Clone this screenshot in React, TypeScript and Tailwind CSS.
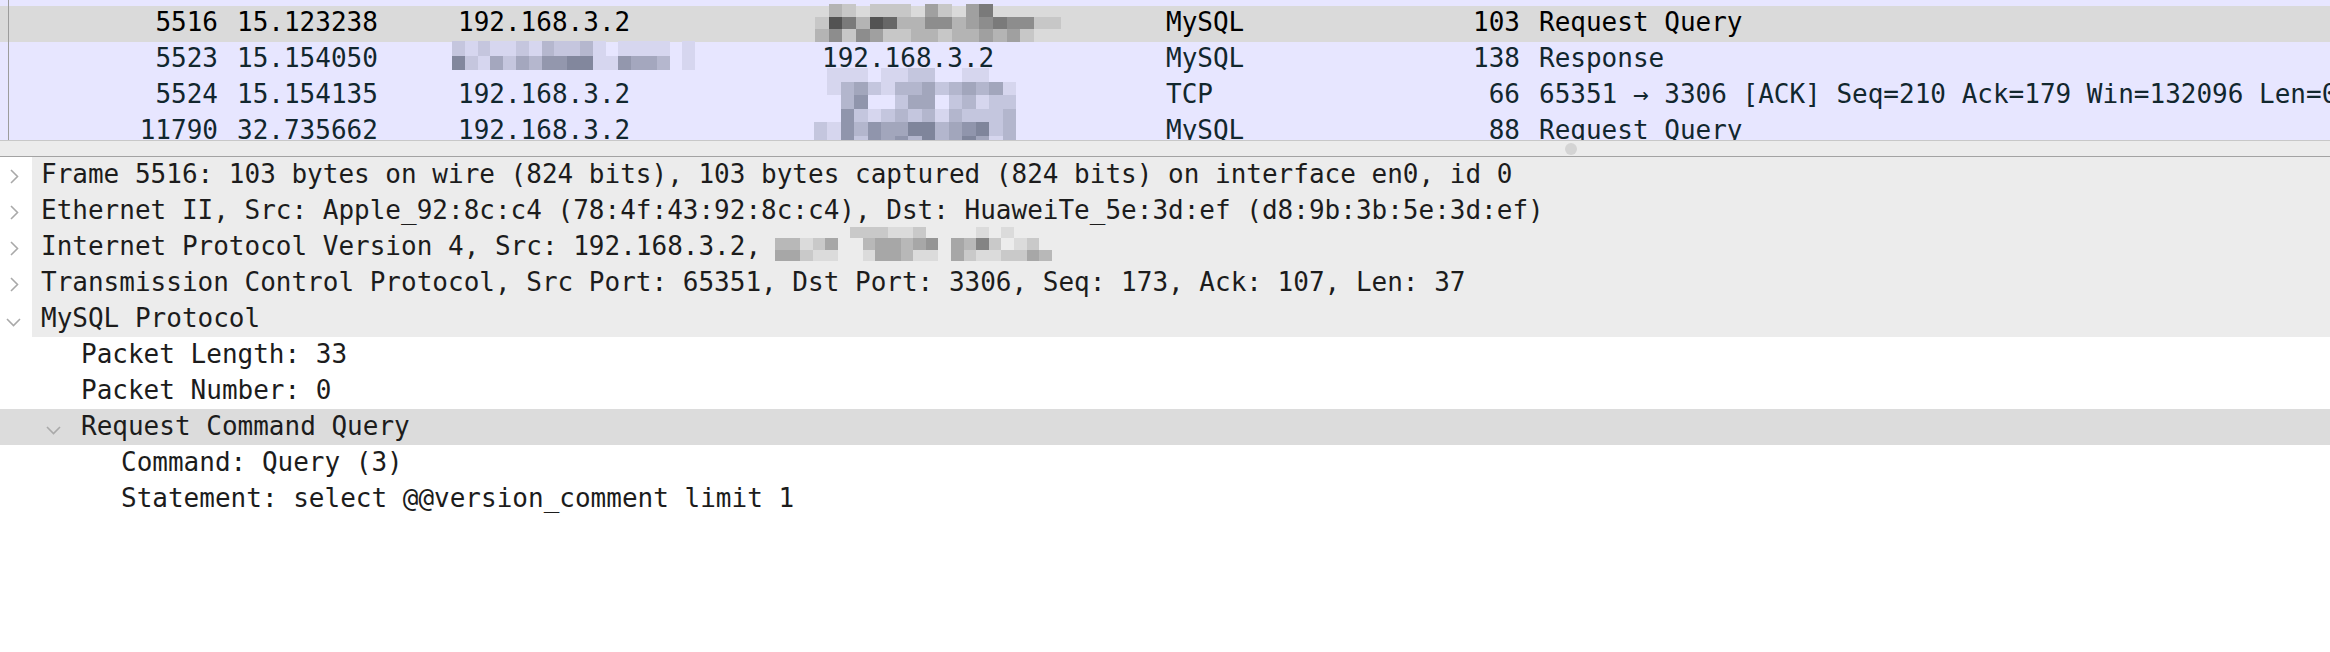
import React from "react";

type Packet = {
  no: string;
  time: string;
  src: string;
  dst: string;
  proto: string;
  len: string;
  info: string;
  sel?: boolean;
};

const packets: Packet[] = [
  { no: "5516", time: "15.123238", src: "192.168.3.2", dst: "", proto: "MySQL", len: "103", info: "Request Query", sel: true },
  { no: "5523", time: "15.154050", src: "", dst: "192.168.3.2", proto: "MySQL", len: "138", info: "Response" },
  { no: "5524", time: "15.154135", src: "192.168.3.2", dst: "", proto: "TCP", len: "66", info: "65351 → 3306 [ACK] Seq=210 Ack=179 Win=132096 Len=0" },
  { no: "11790", time: "32.735662", src: "192.168.3.2", dst: "", proto: "MySQL", len: "88", info: "Request Query" },
];

type Node = { lvl: 0 | 1 | 2; open?: boolean; leaf?: boolean; text: string; sel?: boolean; redact?: boolean };

const tree: Node[] = [
  { lvl: 0, text: "Frame 5516: 103 bytes on wire (824 bits), 103 bytes captured (824 bits) on interface en0, id 0" },
  { lvl: 0, text: "Ethernet II, Src: Apple_92:8c:c4 (78:4f:43:92:8c:c4), Dst: HuaweiTe_5e:3d:ef (d8:9b:3b:5e:3d:ef)" },
  { lvl: 0, text: "Internet Protocol Version 4, Src: 192.168.3.2, ", redact: true },
  { lvl: 0, text: "Transmission Control Protocol, Src Port: 65351, Dst Port: 3306, Seq: 173, Ack: 107, Len: 37" },
  { lvl: 0, open: true, text: "MySQL Protocol" },
  { lvl: 1, leaf: true, text: "Packet Length: 33" },
  { lvl: 1, leaf: true, text: "Packet Number: 0" },
  { lvl: 1, open: true, sel: true, text: "Request Command Query" },
  { lvl: 2, leaf: true, text: "Command: Query (3)" },
  { lvl: 2, leaf: true, text: "Statement: select @@version_comment limit 1" },
];

// pixelated redaction blocks, digit 0 = darkest, 9 = see-through
function Mosaic({
  rows,
  cell,
  cellH,
  dark,
  bg,
  className = "",
}: {
  rows: string[];
  cell: number;
  cellH: number;
  dark: number[];
  bg: number[];
  className?: string;
}) {
  return (
    <div className={"flex flex-col " + className}>
      {rows.map((r, i) => (
        <div key={i} className="flex">
          {r.split("").map((c, j) => {
            const t = Number(c) / 9;
            const col = dark.map((d, k) => Math.round(d + (bg[k] - d) * t));
            return (
              <div
                key={j}
                style={{
                  width: cell,
                  height: cellH,
                  background: c === "9" ? "transparent" : `rgb(${col.join(",")})`,
                }}
              />
            );
          })}
        </div>
      ))}
    </div>
  );
}

const Chevron = ({ open }: { open?: boolean }) =>
  open ? (
    <svg width="15" height="9" viewBox="0 0 15 9" className="ml-[6px] mt-[7px]">
      <path d="M1 1 L7.5 7.5 L14 1" fill="none" stroke="#a9a9a9" strokeWidth="1.6" />
    </svg>
  ) : (
    <svg width="9" height="15" viewBox="0 0 9 15" className="ml-[10px] mt-[3px]">
      <path d="M1 1 L7.5 7.5 L1 14" fill="none" stroke="#a9a9a9" strokeWidth="1.6" />
    </svg>
  );

const indent = ["w-0", "w-[40px]", "w-[80px]"];

export default function App() {
  return (
    <div className="w-[2330px] h-[652px] overflow-hidden bg-white font-['DejaVu_Sans_Mono','Liberation_Mono',monospace] text-[26px]">
      {/* packet list */}
      <div className="relative h-[140px] overflow-hidden bg-[#e7e6ff] text-[#12272e]">
        <div className="h-[6px]" />
        {packets.map((p) => (
          <div
            key={p.no}
            className={`flex h-[36px] items-center whitespace-nowrap leading-[36px] pb-[4px] ${
              p.sel ? "bg-[#dadada] text-black" : ""
            }`}
          >
            <div className="w-[218px] shrink-0 text-right">{p.no}</div>
            <div className="w-[240px] shrink-0 pl-[19px]">{p.time}</div>
            <div className="w-[364px] shrink-0">{p.src}</div>
            <div className="w-[344px] shrink-0">{p.dst}</div>
            <div className="w-[234px] shrink-0">{p.proto}</div>
            <div className="w-[120px] shrink-0 text-right">{p.len}</div>
            <div className="flex-1 pl-[19px]">{p.info}</div>
          </div>
        ))}
        <div className="absolute left-[8px] top-0 bottom-0 w-px bg-[#9c9c9c]" />

        <Mosaic
          className="absolute left-[815px] top-[4px]"
          cell={13.7}
          cellH={12.7}
          dark={[45, 45, 45]}
          bg={[218, 218, 218]}
          rows={["978988896896499999", "824723775576545588", "758568877877676899"]}
        />
        <Mosaic
          className="absolute left-[452px] top-[41px]"
          cell={12.8}
          cellH={14.5}
          dark={[80, 88, 108]}
          bg={[231, 230, 255]}
          rows={["787887867768988889899", "378575644338845569899"]}
        />
        <Mosaic
          className="absolute left-[800px] top-[68px]"
          cell={13.5}
          cellH={13.5}
          dark={[75, 85, 105]}
          bg={[231, 230, 255]}
          rows={[
            "99888988779988999999",
            "99865786657656589999",
            "99964997559768779999",
            "99947876768677769999",
            "97846455336543769999",
            "97847454636535869999",
          ]}
        />
      </div>

      {/* horizontal scroller */}
      <div className="relative h-[17px] border-t border-b border-t-[#c8c8c8] border-b-[#a3a3a3] bg-[#ececec]">
        <div className="absolute left-[1565px] top-[2px] h-[12px] w-[12px] rounded-full bg-[#d4d4d4]" />
      </div>

      {/* packet details */}
      <div className="text-[#1c1c1c]">
        {tree.map((n, i) => (
          <div key={i} className={`flex h-[36px] whitespace-nowrap ${n.sel ? "bg-[#dcdcdc]" : ""}`}>
            <div className={indent[n.lvl] + " shrink-0"} />
            <div className="flex w-[32px] shrink-0 items-center">{!n.leaf && <Chevron open={n.open} />}</div>
            <div
              className={`flex flex-1 items-center pl-[9px] leading-[36px] pb-[2px] ${
                n.lvl === 0 ? "bg-[#ececec]" : ""
              }`}
            >
              <span className="whitespace-pre">{n.text}</span>
              {n.redact && (
                <Mosaic
                  className="-ml-[2px] mt-[-4px]"
                  cell={12.6}
                  cellH={11.3}
                  dark={[80, 80, 80]}
                  bg={[236, 236, 236]}
                  rows={["9999997778879999898999999", "6687599655654956379879999", "5578899855688957887756999"]}
                />
              )}
            </div>
          </div>
        ))}
      </div>
    </div>
  );
}
